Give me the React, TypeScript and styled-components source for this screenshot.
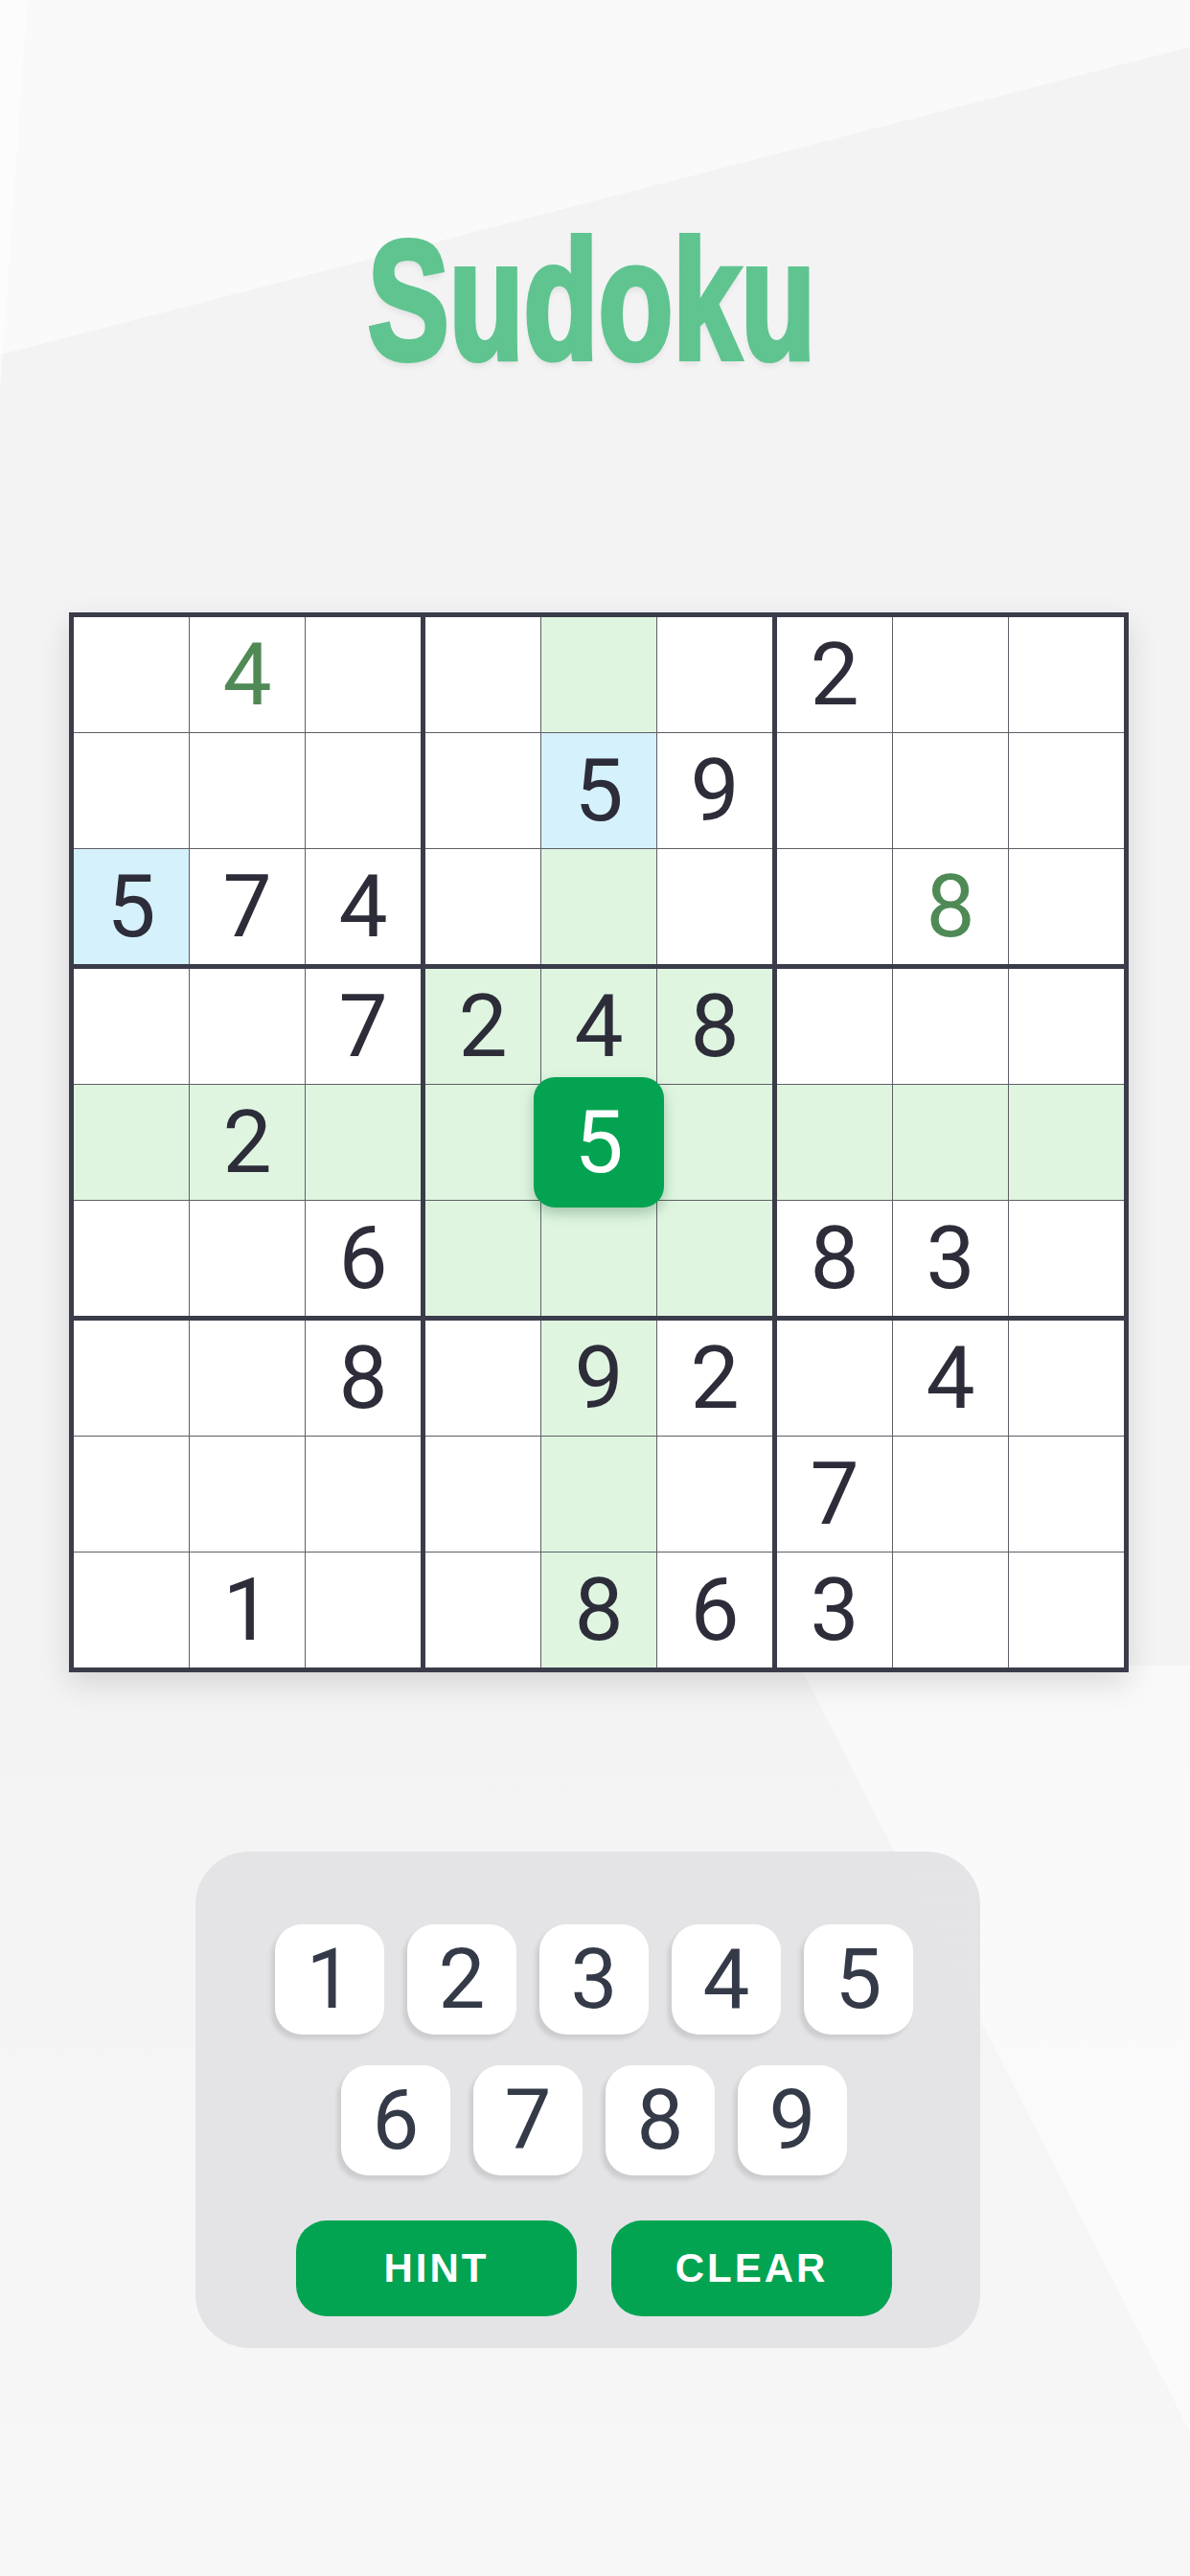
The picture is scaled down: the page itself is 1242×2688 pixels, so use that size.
import React from 'react';
import styled, { createGlobalStyle } from 'styled-components';

const GlobalStyle = createGlobalStyle`
    html, body {
        margin: 0;
        padding: 0;
    }
    body {
        background: #f3f3f4;
        font-family: Roboto, 'Liberation Sans', sans-serif;
    }
`;

const Page = styled.div`
    min-height: 2688px;
    display: flex;
    flex-direction: column;
    background:
        linear-gradient(165.5deg, rgba(255, 255, 255, 0.55) 12.3%, rgba(255, 255, 255, 0) 12.3%) 0 0 / 100% 100% no-repeat,
        linear-gradient(94deg, rgba(255, 255, 255, 0.5) 2%, rgba(255, 255, 255, 0) 2%) 0 0 / 100% 100% no-repeat,
        linear-gradient(63deg, rgba(255, 255, 255, 0) 76.4%, rgba(255, 255, 255, 0.5) 76.4%) 0 100% / 100% 950px no-repeat,
        linear-gradient(180deg, rgba(255, 255, 255, 0) 0%, rgba(255, 255, 255, 0.35) 100%) 0 100% / 100% 950px no-repeat,
        #f3f3f4;
`;

const Title = styled.h1`
    margin: 225px 0 0;
    padding-right: 10px;
    height: 180px;
    font-family: 'Liberation Sans', Arial, sans-serif;
    font-weight: 700;
    font-size: 177px;
    line-height: 1;
    text-align: center;
    color: #5fc48f;
    -webkit-text-stroke: 6px #5fc48f;
    text-shadow: 0 6px 8px rgba(0, 0, 0, 0.08);
    transform: scaleX(0.72);
`;

const Board = styled.div`
    margin: 234px 0 0 72px;
    width: fit-content;
    display: grid;
    grid-template-columns: repeat(3, auto);
    gap: 5px;
    padding: 5px;
    background: #3a3c4a;
    box-shadow: 0 12px 30px rgba(0, 0, 0, 0.12);
`;

const Box = styled.div`
    display: grid;
    grid-template-columns: repeat(3, 120px);
    grid-auto-rows: 120px;
    gap: 1px;
    background: #5e5f66;
`;

type Tone = 'plain' | 'green' | 'blue';

const toneBg: Record<Tone, string> = {
    plain: '#ffffff',
    green: '#dff5e0',
    blue: '#d5f1fc',
};

const Cell = styled.div<{ $tone: Tone; $given: boolean }>`
    position: relative;
    display: flex;
    align-items: center;
    justify-content: center;
    background: ${(p) => toneBg[p.$tone]};
    font-size: 91px;
    font-weight: 400;
    line-height: 1;
    color: ${(p) => (p.$given ? '#2d2d3a' : '#4f8a56')};
`;

const Selected = styled.div`
    position: absolute;
    inset: -8px;
    z-index: 2;
    display: flex;
    align-items: center;
    justify-content: center;
    border-radius: 22px;
    background: #03a352;
    color: #ffffff;
    box-shadow: 0 6px 14px rgba(0, 80, 30, 0.28);
`;

const Pad = styled.div`
    margin: 187px 0 0 204px;
    width: 819px;
    height: 518px;
    box-sizing: border-box;
    padding: 76px 0 0 13px;
    border-radius: 56px;
    background: rgba(224, 225, 228, 0.85);
    display: flex;
    flex-direction: column;
    align-items: center;
    gap: 32px;
`;

const KeyRow = styled.div`
    display: flex;
    gap: 24px;
`;

const Key = styled.button`
    width: 114px;
    height: 115px;
    padding: 0;
    border: none;
    border-radius: 28px;
    background: #ffffff;
    box-shadow: -4px 5px 4px rgba(0, 0, 0, 0.1);
    font-family: Roboto, 'Liberation Sans', sans-serif;
    font-size: 87px;
    font-weight: 400;
    line-height: 1;
    color: #353a48;
`;

const ActionRow = styled.div`
    display: flex;
    gap: 36px;
    margin-top: 15px;
`;

const Action = styled.button`
    width: 293px;
    height: 100px;
    border: none;
    border-radius: 32px;
    background: #02a452;
    color: #ffffff;
    font-family: 'Liberation Sans', Arial, sans-serif;
    font-weight: 700;
    font-size: 42px;
    letter-spacing: 3px;
`;

// 0 = empty, negative = entered by player (green)
const puzzle: number[][] = [
    [0, -4, 0, 0, 0, 0, 2, 0, 0],
    [0, 0, 0, 0, 5, 9, 0, 0, 0],
    [5, 7, 4, 0, 0, 0, 0, -8, 0],
    [0, 0, 7, 2, 4, 8, 0, 0, 0],
    [0, 2, 0, 0, 5, 0, 0, 0, 0],
    [0, 0, 6, 0, 0, 0, 8, 3, 0],
    [0, 0, 8, 0, 9, 2, 0, 4, 0],
    [0, 0, 0, 0, 0, 0, 7, 0, 0],
    [0, 1, 0, 0, 8, 6, 3, 0, 0],
];

const sel = { r: 4, c: 4 };

const toneFor = (r: number, c: number): Tone => {
    const v = Math.abs(puzzle[r][c]);
    const selVal = Math.abs(puzzle[sel.r][sel.c]);
    if (v && v === selVal && !(r === sel.r && c === sel.c)) return 'blue';
    const sameBox = Math.floor(r / 3) === Math.floor(sel.r / 3) && Math.floor(c / 3) === Math.floor(sel.c / 3);
    if (r === sel.r || c === sel.c || sameBox) return 'green';
    return 'plain';
};

const App = () => (
    <Page>
        <GlobalStyle />
        <Title>Sudoku</Title>
        <Board>
            {Array.from({ length: 9 }, (_, b) => (
                <Box key={b}>
                    {Array.from({ length: 9 }, (_, i) => {
                        const r = Math.floor(b / 3) * 3 + Math.floor(i / 3);
                        const c = (b % 3) * 3 + (i % 3);
                        const v = puzzle[r][c];
                        const isSel = r === sel.r && c === sel.c;
                        return (
                            <Cell key={i} $tone={toneFor(r, c)} $given={v >= 0}>
                                {isSel ? <Selected>{Math.abs(v)}</Selected> : v !== 0 ? Math.abs(v) : null}
                            </Cell>
                        );
                    })}
                </Box>
            ))}
        </Board>
        <Pad>
            <KeyRow>
                {[1, 2, 3, 4, 5].map((n) => (
                    <Key key={n}>{n}</Key>
                ))}
            </KeyRow>
            <KeyRow>
                {[6, 7, 8, 9].map((n) => (
                    <Key key={n}>{n}</Key>
                ))}
            </KeyRow>
            <ActionRow>
                <Action>HINT</Action>
                <Action>CLEAR</Action>
            </ActionRow>
        </Pad>
    </Page>
);

export default App;
